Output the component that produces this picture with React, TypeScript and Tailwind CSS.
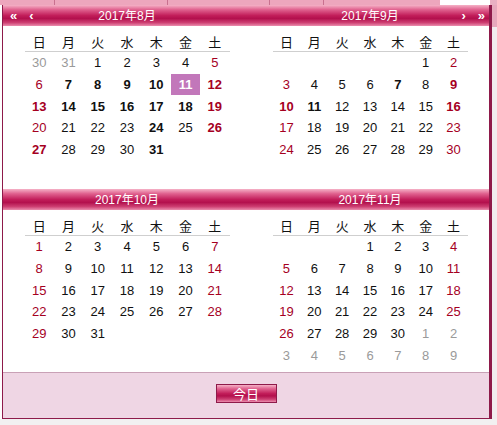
import React from "react";

const WEEK = ["日", "月", "火", "水", "木", "金", "土"];

type Cell = { n: number; gray: boolean } | null;

type Month = {
  title: string;
  cells: Cell[];
  bold: number[];
  selected?: number;
};

function buildCells(lead: number[], offset: number, days: number, trail: number[]): Cell[] {
  const out: Cell[] = [];
  for (let i = 0; i < offset - lead.length; i++) out.push(null);
  lead.forEach((n) => out.push({ n, gray: true }));
  for (let d = 1; d <= days; d++) out.push({ n: d, gray: false });
  trail.forEach((n) => out.push({ n, gray: true }));
  return out;
}

const AUG: Month = {
  title: "2017年8月",
  cells: buildCells([30, 31], 2, 31, []),
  bold: [7, 8, 9, 10, 12, 13, 14, 15, 16, 17, 18, 19, 24, 26, 27, 31],
  selected: 11,
};
const SEP: Month = {
  title: "2017年9月",
  cells: buildCells([], 5, 30, []),
  bold: [7, 9, 10, 11, 16],
};
const OCT: Month = {
  title: "2017年10月",
  cells: buildCells([], 0, 31, []),
  bold: [],
};
const NOV: Month = {
  title: "2017年11月",
  cells: buildCells([], 3, 30, [1, 2, 3, 4, 5, 6, 7, 8, 9]),
  bold: [],
};

const HEADER_BG =
  "bg-[linear-gradient(to_bottom,#f5b2c7_0%,#e0628f_22%,#c21e5a_50%,#b3104d_64%,#cd3f72_84%,#eb8eae_100%)]";

function MonthGrid({ month, width }: { month: Month; width: string }) {
  return (
    <div className={`${width} mx-auto pt-[5px]`}>
      <div className="grid grid-cols-7 h-[21px] border-b border-[#cfcfcf] text-[13px] text-[#111] font-['Noto_Sans_CJK_JP',sans-serif]">
        {WEEK.map((w) => (
          <div key={w} className="flex items-center justify-center leading-none">
            {w}
          </div>
        ))}
      </div>
      <div className="grid grid-cols-7 text-[13px]">
        {month.cells.map((c, i) => {
          if (!c) return <div key={i} className="h-[21.7px]" />;
          const col = i % 7;
          const sel = !c.gray && month.selected === c.n;
          const bold = !c.gray && (month.bold.includes(c.n) || sel);
          let color = "text-[#111]";
          if (c.gray) color = "text-[#9a9a9a]";
          else if (sel) color = "text-white bg-[#c277ba]";
          else if (col === 0 || col === 6) color = "text-[#a5001f]";
          return (
            <div
              key={i}
              className={`h-[21.7px] flex items-center justify-center leading-none ${color} ${
                bold ? "font-bold" : ""
              }`}
            >
              {c.n}
            </div>
          );
        })}
      </div>
    </div>
  );
}

function HeaderBar({ left, right, nav }: { left: string; right: string; nav: boolean }) {
  return (
    <div className={`flex h-[21px] text-white text-[12px] ${HEADER_BG}`}>
      <div className="w-[248px] flex items-center">
        <div className="w-[40px] pl-[7px] flex items-center gap-[12px] font-bold text-[13px] leading-none">
          {nav && <span>«</span>}
          {nav && <span>‹</span>}
        </div>
        <div className="flex-1 text-center leading-none">{left}</div>
        <div className="w-[40px]" />
      </div>
      <div className="w-[238px] flex items-center">
        <div className="w-[40px]" />
        <div className="flex-1 text-center leading-none">{right}</div>
        <div className="w-[40px] pr-[4px] flex items-center justify-end gap-[12px] font-bold text-[13px] leading-none">
          {nav && <span>›</span>}
          {nav && <span>»</span>}
        </div>
      </div>
    </div>
  );
}

export default function App() {
  return (
    <div className="w-[497px] h-[425px] overflow-hidden bg-[#f2f0f1] flex flex-col font-['Liberation_Sans','Noto_Sans_CJK_JP',sans-serif]">
      {/* page tabs behind the popup */}
      <div className="h-[5px] flex shrink-0 bg-[#eda6bd]">
        <div className="w-[55px] border-r border-[#c9708f]" />
        <div className="w-[113px] border-r border-[#c9708f]" />
        <div className="w-[102px] border-r border-[#c9708f]" />
        <div className="w-[54px] border-r border-[#c9708f]" />
        <div className="w-[116px]" />
        <div className="w-[50px] bg-white" />
        <div className="flex-1 bg-[#e9b0c3]" />
      </div>

      <div className="flex">
        <div className="w-[2px] bg-white" />
        <div className="w-[490px] border-l border-b border-r-[3px] border-[#8e1a4a] bg-white flex flex-col">
          <HeaderBar left={AUG.title} right={SEP.title} nav />
          <div className="flex h-[163px]">
            <div className="w-[248px]">
              <MonthGrid month={AUG} width="w-[205px]" />
            </div>
            <div className="w-[238px]">
              <MonthGrid month={SEP} width="w-[195px]" />
            </div>
          </div>

          <HeaderBar left={OCT.title} right={NOV.title} nav={false} />
          <div className="flex h-[162px]">
            <div className="w-[248px]">
              <MonthGrid month={OCT} width="w-[205px]" />
            </div>
            <div className="w-[238px]">
              <MonthGrid month={NOV} width="w-[195px]" />
            </div>
          </div>

          <div className="h-[46px] border-t border-[#c9a1b6] bg-[#efd6e4] flex justify-center pt-[11px]">
            <button
              type="button"
              className={`w-[61px] h-[19px] border border-[#8e1a4a] text-white text-[13px] leading-none flex items-center justify-center font-['Noto_Sans_CJK_JP',sans-serif] ${HEADER_BG}`}
            >
              今日
            </button>
          </div>
        </div>
        <div className="flex-1 flex flex-col">
          <div className="h-[22px] bg-[#e7a9bd]" />
          <div className="flex-1 bg-[#f1edef]" />
        </div>
      </div>
    </div>
  );
}
